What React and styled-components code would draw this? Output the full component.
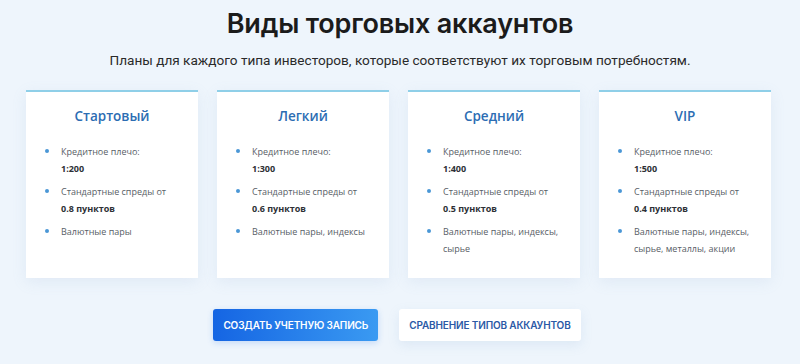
import styled, { createGlobalStyle } from "styled-components";

const GlobalStyle = createGlobalStyle`
  html, body {
    margin: 0;
    padding: 0;
    background: #eef5fc;
  }
  * { box-sizing: border-box; }
`;

const Page = styled.section`
  width: 800px;
  height: 364px;
  padding-top: 8px;
  display: flex;
  flex-direction: column;
  align-items: center;
  background: #eef5fc;
  font-family: "Open Sans", "Liberation Sans", sans-serif;
`;

const Heading = styled.h1`
  margin: 0;
  font-family: Inter, "Liberation Sans", sans-serif;
  font-weight: 600;
  font-size: 27px;
  line-height: 32px;
  color: #1b1b1b;
  letter-spacing: -0.2px;
`;

const Subtitle = styled.p`
  margin: 11px 0 0;
  font-family: Roboto, "Liberation Sans", sans-serif;
  font-size: 13.6px;
  line-height: 18px;
  color: #2a2a2a;
`;

const Cards = styled.div`
  margin: 21px 3px 0 0;
  display: grid;
  grid-template-columns: repeat(4, 172px);
  gap: 19px;
`;

const Card = styled.article`
  height: 188px;
  background: #ffffff;
  border-top: 2px solid #8fcfe8;
  box-shadow: 0 4px 14px rgba(120, 160, 200, 0.12);
  padding: 14px 0 0 19px;
`;

const CardTitle = styled.h3`
  margin: 0 0 17px -19px;
  text-align: center;
  font-family: "Open Sans", sans-serif;
  font-weight: 600;
  font-size: 13.5px;
  line-height: 20px;
  color: #2c6db3;
`;

const List = styled.ul`
  margin: 0;
  padding: 0;
  list-style: none;
  display: flex;
  flex-direction: column;
  gap: 6px;
`;

const Item = styled.li`
  position: relative;
  padding-left: 16px;
  font-size: 9px;
  line-height: 17px;
  color: #585e66;

  &::before {
    content: "";
    position: absolute;
    left: 0;
    top: 6px;
    width: 4px;
    height: 4px;
    border-radius: 50%;
    background: #4a97d6;
  }
`;

const Strong = styled.b`
  display: block;
  font-weight: 700;
  color: #2d3035;
`;

const Actions = styled.div`
  margin: 31px 6px 0 0;
  display: flex;
  gap: 21px;
`;

const Button = styled.button`
  height: 32px;
  padding: 0 10px;
  border: none;
  border-radius: 3px;
  font-family: Inter, "Liberation Sans", sans-serif;
  font-weight: 600;
  font-size: 10px;
  text-transform: uppercase;
  letter-spacing: -0.15px;
  cursor: pointer;
  background: ${(p) =>
    p.$primary ? "linear-gradient(90deg, #1565e3 0%, #3a9af2 100%)" : "#ffffff"};
  color: ${(p) => (p.$primary ? "#ffffff" : "#2b5aa6")};
  box-shadow: ${(p) =>
    p.$primary ? "0 2px 6px rgba(30, 110, 230, 0.2)" : "0 4px 12px rgba(120, 160, 200, 0.15)"};
`;

const plans = [
  { name: "Стартовый", lev: "1:200", spread: "0.8 пунктов", assets: "Валютные пары" },
  { name: "Легкий", lev: "1:300", spread: "0.6 пунктов", assets: "Валютные пары, индексы" },
  { name: "Средний", lev: "1:400", spread: "0.5 пунктов", assets: "Валютные пары, индексы, сырье" },
  { name: "VIP", lev: "1:500", spread: "0.4 пунктов", assets: "Валютные пары, индексы, сырье, металлы, акции" },
];

export default function App() {
  return (
    <>
      <GlobalStyle />
      <Page>
        <Heading>Виды торговых аккаунтов</Heading>
        <Subtitle>
          Планы для каждого типа инвесторов, которые соответствуют их торговым потребностям.
        </Subtitle>
        <Cards>
          {plans.map((p) => (
            <Card key={p.name}>
              <CardTitle>{p.name}</CardTitle>
              <List>
                <Item>
                  Кредитное плечо:
                  <Strong>{p.lev}</Strong>
                </Item>
                <Item>
                  Стандартные спреды от
                  <Strong>{p.spread}</Strong>
                </Item>
                <Item>{p.assets}</Item>
              </List>
            </Card>
          ))}
        </Cards>
        <Actions>
          <Button $primary>Создать учетную запись</Button>
          <Button>Сравнение типов аккаунтов</Button>
        </Actions>
      </Page>
    </>
  );
}
